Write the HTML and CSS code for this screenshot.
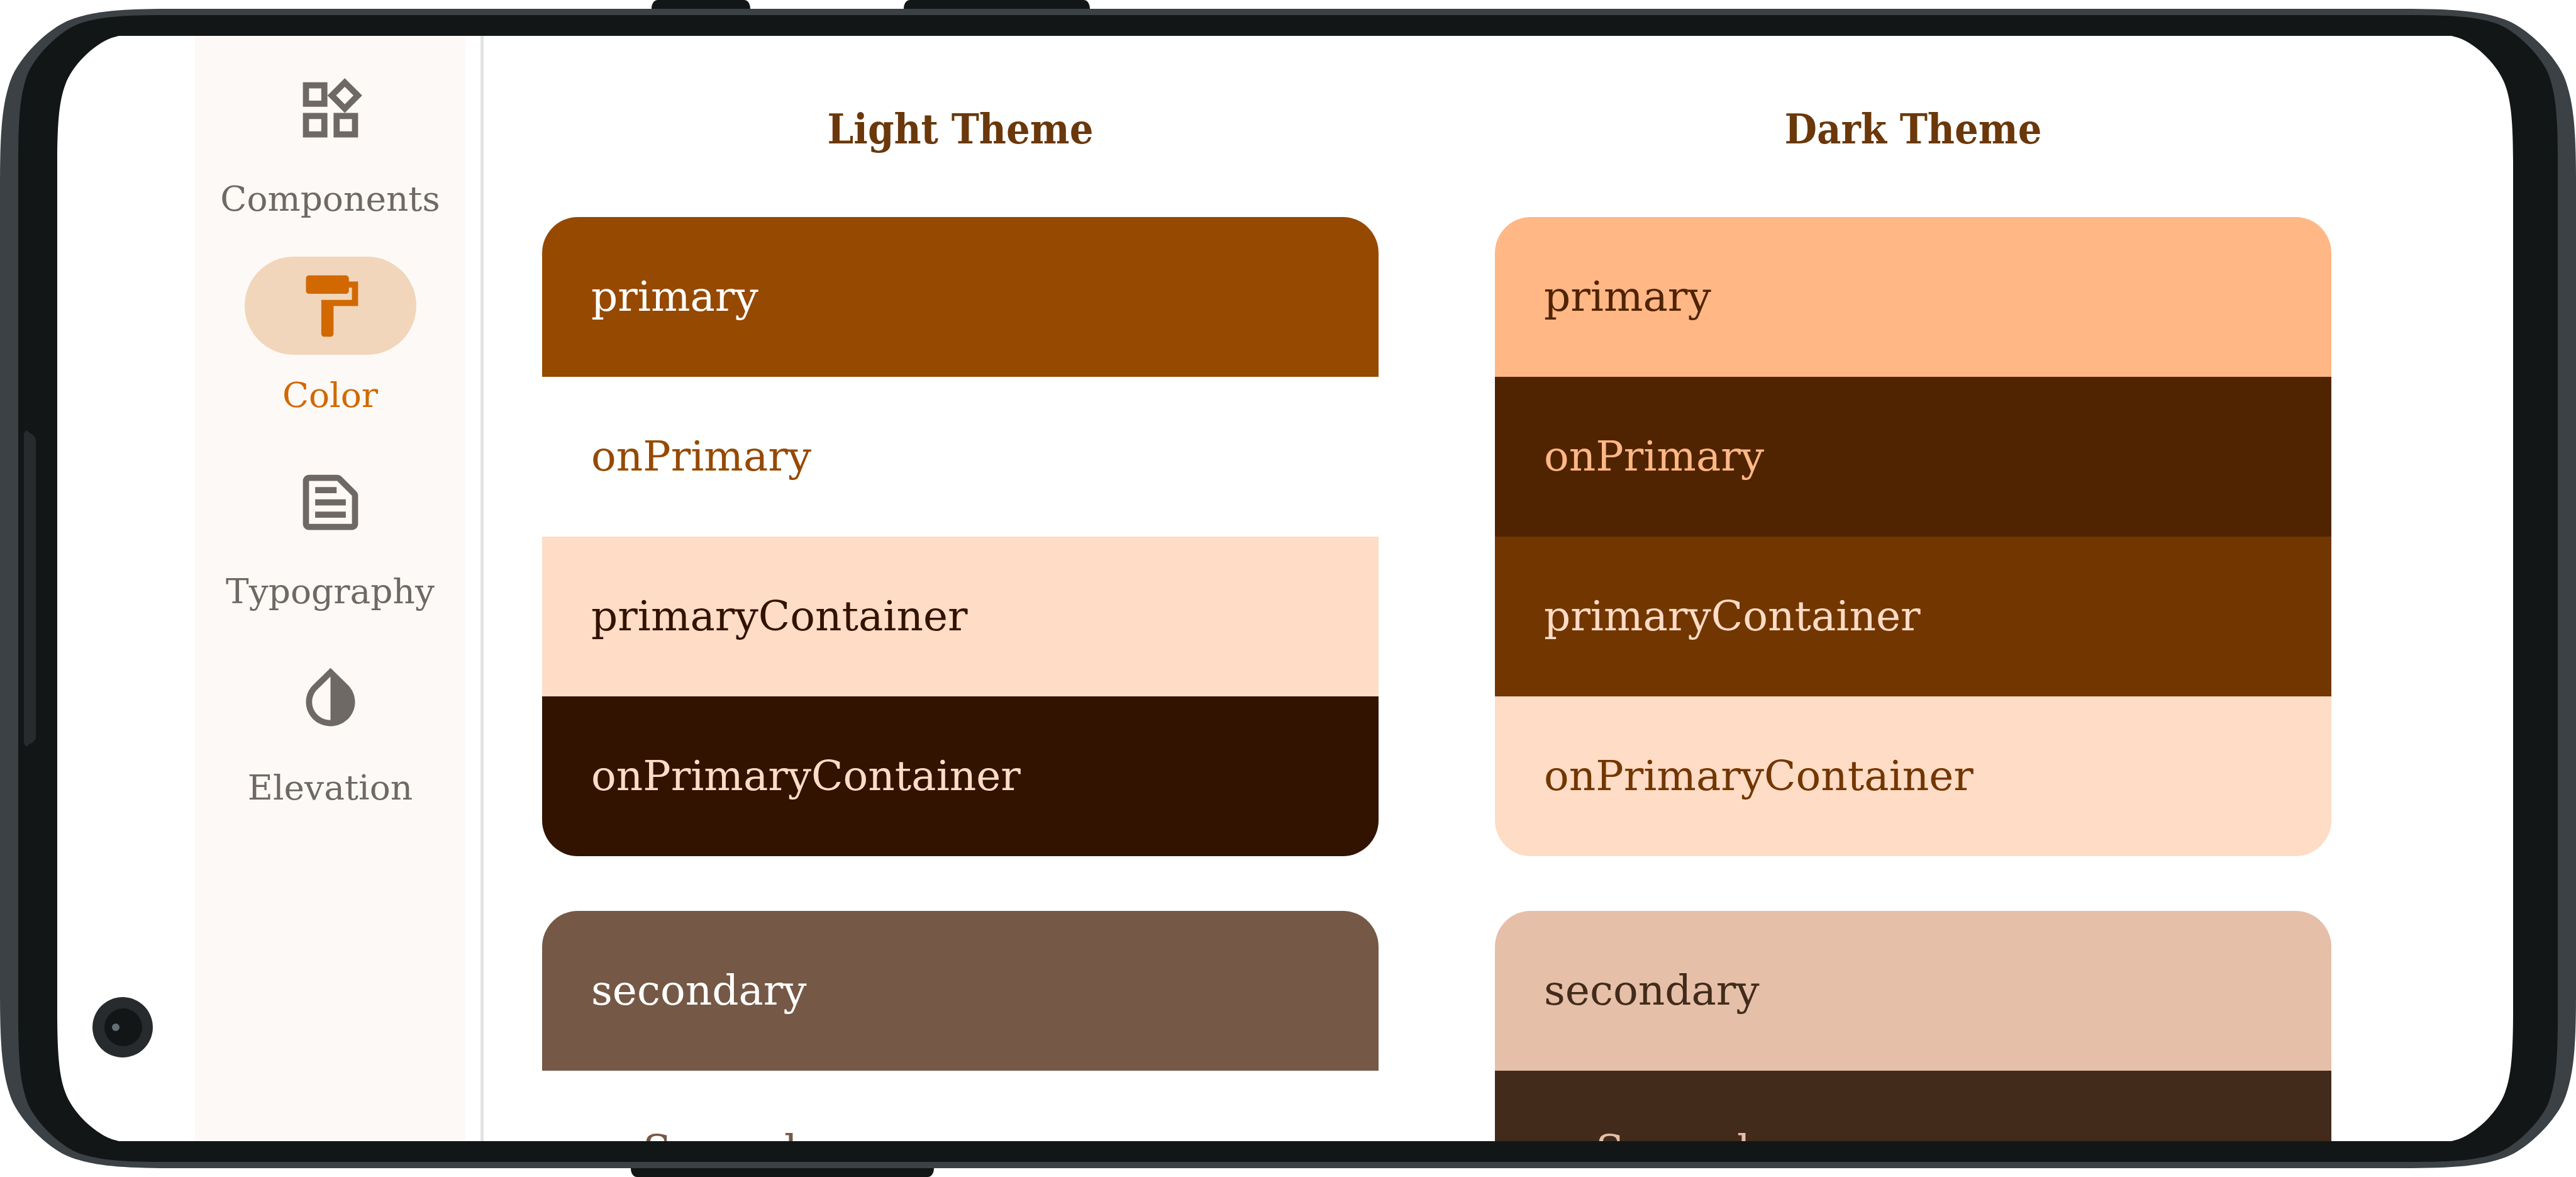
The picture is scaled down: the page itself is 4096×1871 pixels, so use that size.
FILE: index.html
```html
<!DOCTYPE html>
<html lang="en">
<head>
<meta charset="utf-8">
<meta name="viewport" content="width=device-width, initial-scale=1">
<title>Color palette</title>
<link rel="stylesheet" href="styles.css">
</head>
<body>
<div class="device">
  <div class="screen">
    <nav class="rail" aria-label="Sections">
      <a class="rail-item" href="#components">
        <span class="rail-icon"><svg viewBox="0 0 24 24" aria-hidden="true"><path d="M16.66 4.52l2.83 2.83-2.83 2.83-2.83-2.83 2.83-2.83M9 5v4H5V5h4m10 10v4h-4v-4h4M9 15v4H5v-4h4m7.66-13.31L11 7.34 16.66 13l5.66-5.66-5.66-5.65zM11 3H3v8h8V3zm10 10h-8v8h8v-8zm-10 0H3v8h8v-8z"/></svg></span>
        <span class="rail-label">Components</span>
      </a>
      <a class="rail-item rail-item-active" href="#color" aria-current="page">
        <span class="rail-icon"><svg viewBox="0 0 24 24" aria-hidden="true"><path d="M18 4V3c0-.55-.45-1-1-1H5c-.55 0-1 .45-1 1v4c0 .55.45 1 1 1h12c.55 0 1-.45 1-1V6h1v4H9v11c0 .55.45 1 1 1h2c.55 0 1-.45 1-1v-9h8V4h-3z"/></svg></span>
        <span class="rail-label">Color</span>
      </a>
      <a class="rail-item" href="#typography">
        <span class="rail-icon"><svg viewBox="0 0 24 24" aria-hidden="true"><path d="M14.17 5L19 9.83V19H5V5h9.17m0-2H5c-1.1 0-2 .9-2 2v14c0 1.1.9 2 2 2h14c1.1 0 2-.9 2-2V9.83c0-.53-.21-1.04-.59-1.41l-4.83-4.83c-.37-.38-.88-.59-1.41-.59zM7 15h10v2H7v-2zm0-4h10v2H7v-2zm0-4h7v2H7V7z"/></svg></span>
        <span class="rail-label">Typography</span>
      </a>
      <a class="rail-item" href="#elevation">
        <span class="rail-icon"><svg viewBox="0 0 24 24" aria-hidden="true"><path d="M12 4.81V19c-3.31 0-6-2.63-6-5.87 0-1.56.62-3.03 1.75-4.14L12 4.81M6.35 7.56C4.9 8.99 4 10.96 4 13.13 4 17.48 7.58 21 12 21s8-3.52 8-7.87c0-2.17-.9-4.14-2.35-5.57L12 2 6.35 7.56z"/></svg></span>
        <span class="rail-label">Elevation</span>
      </a>
    </nav>
    <main class="palettes">
      <section class="theme">
        <h2 class="theme-title">Light Theme</h2>
        <ul class="swatches">
          <li class="swatch light-primary">primary</li>
          <li class="swatch light-on-primary">onPrimary</li>
          <li class="swatch light-primary-container">primaryContainer</li>
          <li class="swatch light-on-primary-container">onPrimaryContainer</li>
        </ul>
        <ul class="swatches">
          <li class="swatch light-secondary">secondary</li>
          <li class="swatch light-on-secondary">onSecondary</li>
        </ul>
      </section>
      <section class="theme">
        <h2 class="theme-title">Dark Theme</h2>
        <ul class="swatches">
          <li class="swatch dark-primary">primary</li>
          <li class="swatch dark-on-primary">onPrimary</li>
          <li class="swatch dark-primary-container">primaryContainer</li>
          <li class="swatch dark-on-primary-container">onPrimaryContainer</li>
        </ul>
        <ul class="swatches">
          <li class="swatch dark-secondary">secondary</li>
          <li class="swatch dark-on-secondary">onSecondary</li>
        </ul>
      </section>
    </main>
  </div>
  <svg class="bezel" viewBox="0 0 4096 1871" preserveAspectRatio="none" aria-hidden="true">
    <defs>
      <path id="body" d="M0 292C0 204 4 164 17 127C30 91 77 44 113 31C150 18 190 14 278 14H3818C3906 14 3946 18 3983 31C4019 44 4066 91 4079 127C4092 164 4096 204 4096 292V1579C4096 1667 4092 1707 4079 1744C4066 1780 4019 1827 3983 1840C3946 1853 3906 1857 3818 1857H278C190 1857 150 1853 113 1840C77 1827 30 1780 17 1744C4 1707 0 1667 0 1579Z"/>
      <path id="face" d="M29 260C29 185 32 152 43 120C54 90 95 49 125 38C157 27 190 24 265 24H3831C3906 24 3939 27 3971 38C4001 49 4042 90 4053 120C4064 152 4067 185 4067 260V1611C4067 1686 4064 1719 4053 1751C4042 1781 4001 1822 3971 1833C3939 1844 3906 1847 3831 1847H265C190 1847 157 1844 125 1833C95 1822 54 1781 43 1751C32 1719 29 1686 29 1611Z"/>
    </defs>
    <!-- Body and face are rings: the opening in the middle shows the screen -->
    <path fill="#121616" d="M1036 14C1036 6 1040 0 1046 0H1183C1189 0 1193 6 1193 14ZM1437 14C1437 6 1441 0 1447 0H1723C1729 0 1733 6 1733 14ZM1003 1857C1003 1865 1007 1871 1013 1871H1475C1481 1871 1485 1865 1485 1857Z"/>
    <mask id="opening" maskUnits="userSpaceOnUse" x="0" y="0" width="4096" height="1871">
      <rect width="4096" height="1871" fill="#fff"/>
      <path fill="#000" d="M91 264C91 195 94 161 104 134C115 104 148 71 178 60L189 57H3898L3909 60C3939 71 3972 104 3983 134C3993 161 3996 195 3996 264V1607C3996 1676 3993 1710 3983 1737C3972 1767 3939 1800 3909 1811L3898 1814H189L178 1811C148 1800 115 1767 104 1737C94 1710 91 1676 91 1607Z"/>
    </mask>
    <g mask="url(#opening)">
      <use href="#body" fill="#3b4144"/>
      <use href="#face" fill="#121616"/>
    </g>
    <path fill="#272b2d" d="M38 692C38 688 41 684 43 684C44 688 57 691 57 699V1172C57 1180 44 1183 43 1187C41 1187 38 1183 38 1179Z"/>
    <circle cx="195" cy="1633" r="48" fill="#272b2d"/>
    <circle cx="196" cy="1633" r="30" fill="#121616"/>
    <circle cx="184" cy="1633" r="6" fill="#656f73"/>
  </svg>
</div>
</body>
</html>
```
FILE: styles.css
```css
* {
  box-sizing: border-box;
}

body {
  margin: 0;
  background: #fff;
  font-family: "DejaVu Serif", serif;
}

.device {
  position: relative;
  height: 100vh;
  padding: 57px 100px 57px 91px;
  overflow: hidden;
}

/* Phone body drawn over the edges of the screen */
.bezel {
  position: absolute;
  inset: 0;
  width: 100%;
  height: 100%;
  pointer-events: none;
}

.screen {
  display: flex;
  height: 100%;
  padding-left: 219px;
  overflow: hidden;
  background: #fff;
}

.rail {
  display: flex;
  flex: none;
  flex-direction: column;
  width: 430px;
  padding-top: 39px;
  background: #fdf9f6;
}

.rail-item {
  display: flex;
  flex: none;
  flex-direction: column;
  align-items: center;
  height: 312px;
  color: #6e6965;
  text-decoration: none;
}

.rail-icon {
  display: flex;
  align-items: center;
  justify-content: center;
  width: 273px;
  height: 156px;
  border-radius: 78px;
}

.rail-icon svg {
  width: 117px;
  height: 117px;
  fill: currentColor;
}

.rail-label {
  margin-top: 32px;
  font-size: 55px;
  line-height: 64px;
}

.rail-item-active {
  color: #d16900;
}

.rail-item-active .rail-icon {
  background: #f1d6bb;
}

.palettes {
  display: grid;
  flex: 1;
  grid-template-columns: 1fr 1fr;
  gap: 185px;
  align-content: start;
  margin-left: 24px;
  padding: 108px 289px 0 93px;
  border-left: 5px solid #e3e3e3;
}

.theme-title {
  margin: 0 0 100px;
  color: #6a380b;
  font-family: "DejaVu Serif Condensed", "DejaVu Serif", serif;
  font-size: 66px;
  font-weight: 700;
  line-height: 80px;
  text-align: center;
}

.swatches {
  margin: 0 0 87px;
  padding: 0;
  overflow: hidden;
  border-radius: 57px;
  list-style: none;
}

.swatch {
  height: 254px;
  padding-left: 78px;
  font-size: 66px;
  line-height: 254px;
}

.light-primary { background: #964900; color: #fff; }
.light-on-primary { background: #fff; color: #964900; }
.light-primary-container { background: #ffdcc6; color: #311300; }
.light-on-primary-container { background: #311300; color: #ffdcc6; }
.light-secondary { background: #755846; color: #fff; }
.light-on-secondary { background: #fff; color: #755846; }

.dark-primary { background: #ffb786; color: #502400; }
.dark-on-primary { background: #502400; color: #ffb786; }
.dark-primary-container { background: #723600; color: #ffdcc6; }
.dark-on-primary-container { background: #ffdcc6; color: #723600; }
.dark-secondary { background: #e5bfa8; color: #422b1b; }
.dark-on-secondary { background: #422b1b; color: #e5bfa8; }
```
